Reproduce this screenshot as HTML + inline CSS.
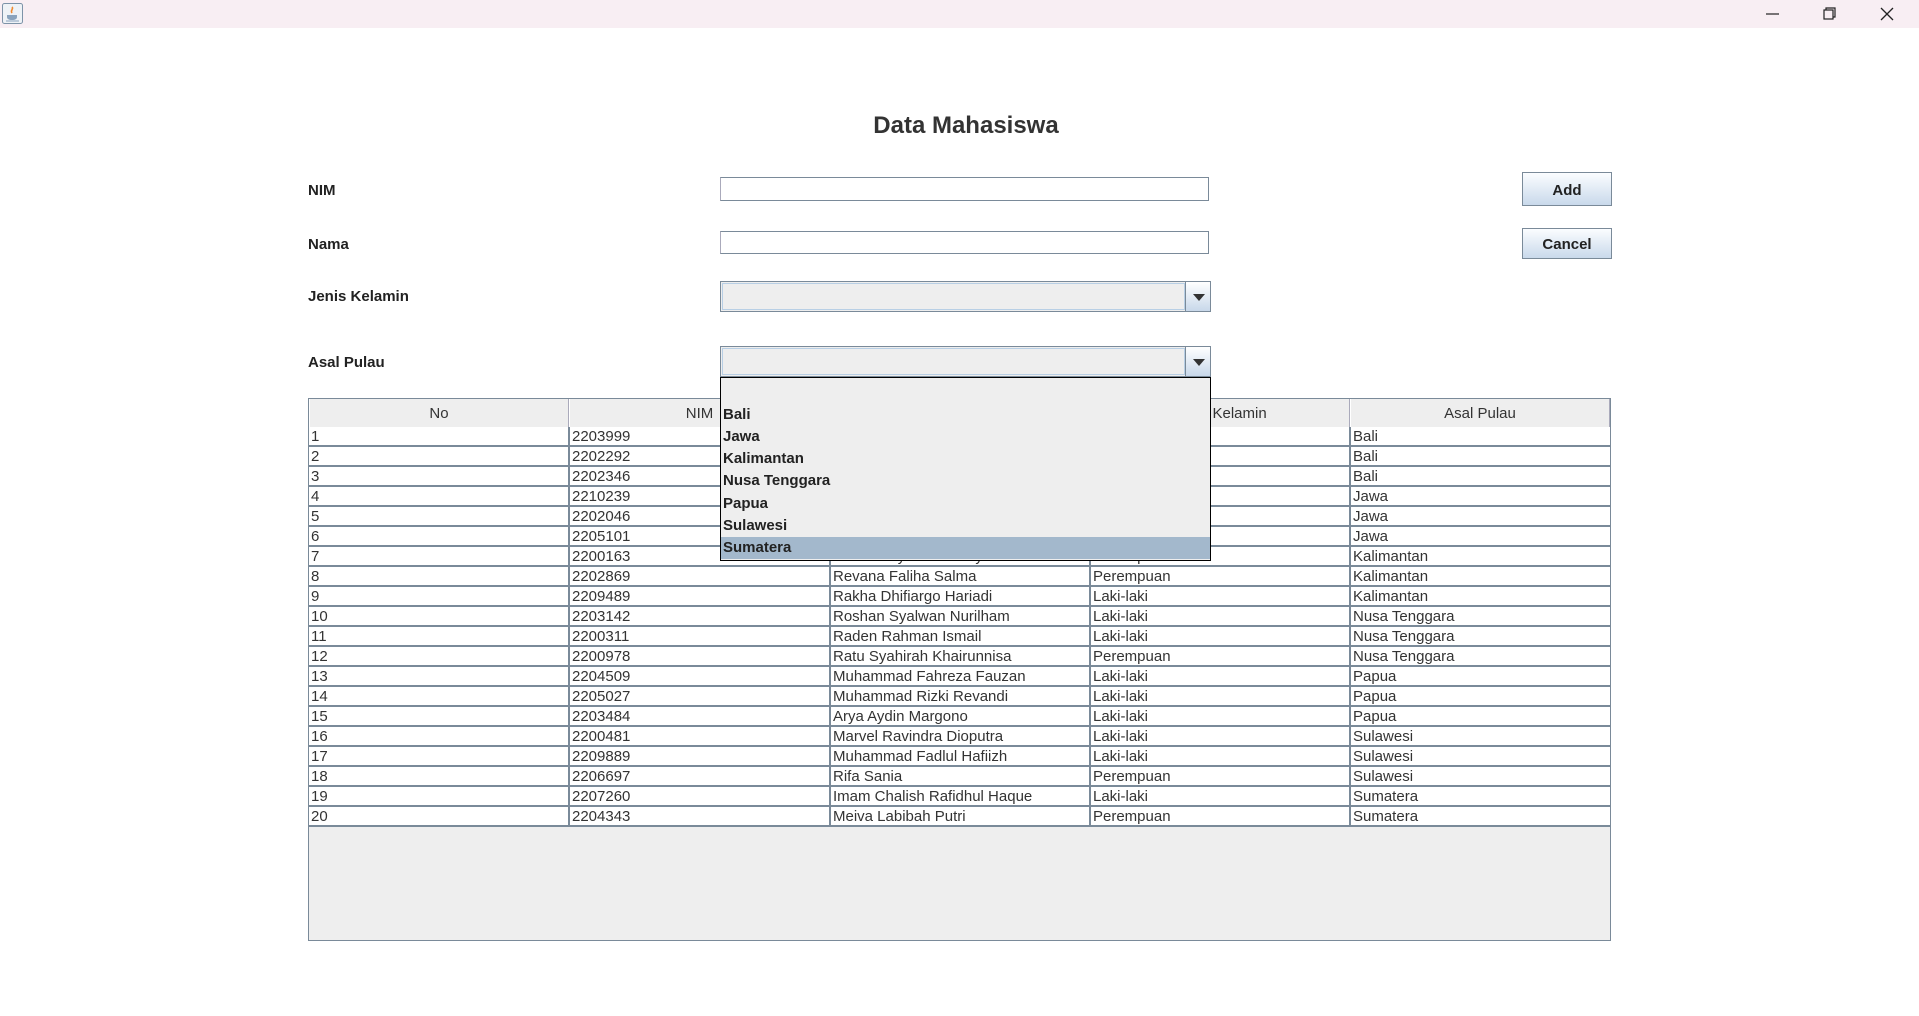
<!DOCTYPE html>
<html><head><meta charset="utf-8"><style>
*{margin:0;padding:0;box-sizing:border-box}
body{width:1919px;height:1016px;background:#fff;position:relative;overflow:hidden;font-family:"Liberation Sans",Arial,sans-serif;color:#333}
.a{position:absolute}
.tb{left:0;top:0;width:1919px;height:28px;background:#f8eef3}
.lbl{font-weight:bold;font-size:15px;color:#222;left:308px;line-height:18px}
.tf{left:720px;width:489px;height:24px;background:#fff;border:1px solid #7a8a99;border-left-color:#aab;border-top-color:#7a8a99}
.cb{left:720px;width:491px;height:31px;border:1px solid #7a8a99;background:#eee}
.cb .in{position:absolute;left:1px;top:1px;right:25px;bottom:1px;border:1px solid #b8cfe5;background:#eee}
.cb .bt{position:absolute;right:0;top:0;width:25px;height:29px;border-left:1px solid #7a8a99;background:linear-gradient(#fff,#c8d8ea)}
.cb .bt:after{content:"";position:absolute;left:7px;top:12px;border-left:6px solid transparent;border-right:6px solid transparent;border-top:7px solid #333}
.btn{left:1522px;width:90px;border:1px solid #7a8a99;background:linear-gradient(#fbfdff,#c9d9eb);font-weight:bold;font-size:15px;color:#222;text-align:center}
.pane{left:308px;top:398px;width:1303px;height:543px;border:1px solid #7a8a99;background:#eee}
.row{position:absolute;left:0;width:1301px;height:20px;background:#fff;border-bottom:2px solid #7a8a99;font-size:15px;line-height:19px}
.row span{position:absolute;top:0;height:18px;padding-left:2px;white-space:nowrap;overflow:hidden;border-left:2px solid #7a8a99}
.hd{position:absolute;left:0;top:0;width:1301px;height:29px;background:#eee;border-bottom:1px solid #7a8a99;font-size:15px}
.hd span{position:absolute;top:0;height:28px;line-height:30px;text-align:center;border-left:1px solid #fff;border-right:1px solid #aab}
.pop{left:720px;top:377px;width:491px;height:184px;border:1px solid #000;background:#eee}
.pop div{position:absolute;left:2px;width:487px;height:22px;font-weight:bold;font-size:15px;line-height:22px;color:#222}
</style></head><body>
<div class="a tb"></div>
<svg class="a" style="left:2px;top:3px" width="21" height="21" viewBox="0 0 21 21"><rect x="0.5" y="0.5" width="20" height="20" rx="2" fill="#eef2f6" stroke="#7d93a8"/><path d="M10 4c2 2-2 3 0 6" stroke="#f08a30" stroke-width="1.6" fill="none"/><path d="M5 12h10v2c0 2-2 3-5 3s-5-1-5-3z" fill="#8aa3bd"/><path d="M4 18h13" stroke="#8aa3bd"/></svg>
<svg class="a" style="left:1764px;top:6px" width="150" height="18"><path d="M2 8h13" stroke="#222" stroke-width="1.2"/><rect x="60" y="4" width="9" height="9" fill="none" stroke="#222" stroke-width="1.2"/><path d="M62 4v-2h9v9h-2" fill="none" stroke="#222" stroke-width="1.2"/><path d="M117 2l12 12M129 2l-12 12" stroke="#222" stroke-width="1.3"/></svg>

<div class="a" style="left:0;width:1932px;top:112px;text-align:center;font-size:24px;font-weight:bold;color:#333">Data Mahasiswa</div>

<div class="a lbl" style="top:182px">NIM</div>
<div class="a lbl" style="top:236px">Nama</div>
<div class="a lbl" style="top:288px">Jenis Kelamin</div>
<div class="a lbl" style="top:354px">Asal Pulau</div>

<div class="a tf" style="top:177px"></div>
<div class="a tf" style="top:231px;height:23px"></div>
<div class="a cb" style="top:281px"><div class="in"></div><div class="bt"></div></div>
<div class="a cb" style="top:346px"><div class="in"></div><div class="bt"></div></div>

<div class="a btn" style="top:172px;height:34px;line-height:36px">Add</div>
<div class="a btn" style="top:228px;height:31px;line-height:31px">Cancel</div>

<div class="a pane">
<div class="hd"><span style="left:0;width:260px">No</span><span style="left:260px;width:261px">NIM</span><span style="left:521px;width:260px">Nama</span><span style="left:781px;width:260px">Jenis Kelamin</span><span style="left:1041px;width:260px">Asal Pulau</span></div>
<div id="rows"></div>
</div>

<div class="a pop">
<div style="top:26px">Bali</div>
<div style="top:48px">Jawa</div>
<div style="top:70px">Kalimantan</div>
<div style="top:92px">Nusa Tenggara</div>
<div style="top:115px">Papua</div>
<div style="top:137px">Sulawesi</div>
<div style="top:159px;background:#a3b8cc;left:0;width:489px;padding-left:2px">Sumatera</div>
</div>

<script>
var d=[["2203999","","","Bali"],["2202292","","","Bali"],["2202346","","","Bali"],["2210239","","","Jawa"],["2202046","","","Jawa"],["2205101","","","Jawa"],["2200163","Hanifah Ayudia Anindya","Perempuan","Kalimantan"],["2202869","Revana Faliha Salma","Perempuan","Kalimantan"],["2209489","Rakha Dhifiargo Hariadi","Laki-laki","Kalimantan"],["2203142","Roshan Syalwan Nurilham","Laki-laki","Nusa Tenggara"],["2200311","Raden Rahman Ismail","Laki-laki","Nusa Tenggara"],["2200978","Ratu Syahirah Khairunnisa","Perempuan","Nusa Tenggara"],["2204509","Muhammad Fahreza Fauzan","Laki-laki","Papua"],["2205027","Muhammad Rizki Revandi","Laki-laki","Papua"],["2203484","Arya Aydin Margono","Laki-laki","Papua"],["2200481","Marvel Ravindra Dioputra","Laki-laki","Sulawesi"],["2209889","Muhammad Fadlul Hafiizh","Laki-laki","Sulawesi"],["2206697","Rifa Sania","Perempuan","Sulawesi"],["2207260","Imam Chalish Rafidhul Haque","Laki-laki","Sumatera"],["2204343","Meiva Labibah Putri","Perempuan","Sumatera"]];
var h="",L=[0,259,520,780,1040],W=[259,261,260,260,261];
d.forEach(function(r,i){var c=[i+1].concat(r);h+='<div class="row" style="top:'+(28+i*20)+'px">';c.forEach(function(t,j){h+='<span style="left:'+L[j]+'px;width:'+W[j]+'px;'+(j==0?'border-left:none;':'')+'">'+t+'</span>'});h+='</div>'});
document.getElementById('rows').innerHTML=h;
</script>
</body></html>
